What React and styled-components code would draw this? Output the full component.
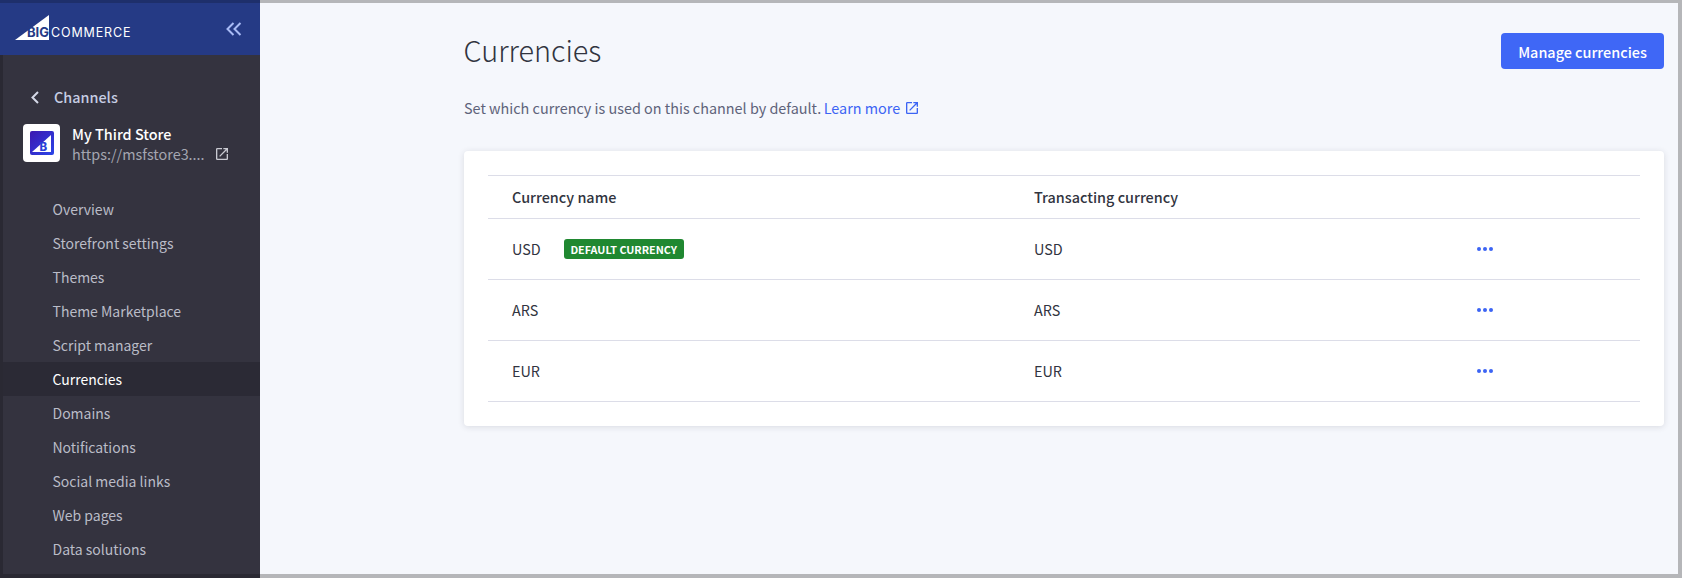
import styled, { createGlobalStyle } from "styled-components";

const GlobalStyle = createGlobalStyle`
  html, body {
    margin: 0;
    padding: 0;
    height: 100%;
    overflow: hidden;
  }
  #root {
    height: 100%;
  }
  * {
    box-sizing: border-box;
  }
`;

const Page = styled.div`
  display: flex;
  width: 1682px;
  height: 578px;
  background-color: #b5b6b9;
  font-family: "Noto Sans CJK SC", "Noto Sans", sans-serif;
  font-size: 14.4px;
  color: #313440;
`;

const Sidebar = styled.aside`
  width: 260px;
  height: 578px;
  flex-shrink: 0;
  display: flex;
  flex-direction: column;
  background-color: #34333f;
  border-left: 3px solid #2a2933;
  border-bottom: 4px solid #2a2933;
`;

const SidebarHeader = styled.div`
  height: 55px;
  margin-left: -3px;
  padding: 0 18px 0 15px;
  display: flex;
  align-items: center;
  justify-content: space-between;
  background-color: #253a85;
  border-top: 3px solid #1e2f6b;
`;

const BackRow = styled.div`
  margin-top: 30px;
  height: 24px;
  padding-left: 27px;
  display: flex;
  align-items: center;
  gap: 14px;
  color: #c6cde3;
  font-weight: 500;
  line-height: 24px;
`;

const Store = styled.div`
  margin-top: 15px;
  padding-left: 20px;
  height: 38px;
  display: flex;
  gap: 12px;
`;

const StoreLogo = styled.div`
  width: 37px;
  height: 38px;
  display: flex;
  align-items: center;
  justify-content: center;
  background-color: #fff;
  border-radius: 4px;
`;

const StoreInfo = styled.div`
  display: flex;
  flex-direction: column;
  margin-top: -1px;
`;

const StoreName = styled.div`
  color: #fff;
  font-weight: 500;
  line-height: 21px;
`;

const UrlRow = styled.div`
  display: flex;
  align-items: center;
  gap: 10px;
  color: #a4a6b1;
  line-height: 19px;
`;

const StoreUrl = styled.span`
  width: 132px;
  white-space: nowrap;
`;

const Nav = styled.nav`
  margin-top: 30px;
  display: flex;
  flex-direction: column;
`;

const NavItem = styled.a`
  height: 34px;
  padding-left: 49.5px;
  font-size: 14px;
  line-height: 34px;
  color: ${(props) => (props.$active ? "#ffffff" : "#babcc7")};
  background-color: ${(props) => (props.$active ? "#2b2a35" : "transparent")};
`;

const Main = styled.main`
  width: 1418px;
  height: 571px;
  margin-top: 3px;
  padding: 30px 14px 0 204px;
  background-color: #f5f7fc;
`;

const TitleRow = styled.div`
  height: 36px;
  display: flex;
  align-items: center;
  justify-content: space-between;
`;

const Title = styled.h1`
  margin: -2px 0 0 -0.5px;
  font-size: 28.8px;
  font-weight: 200;
  line-height: 36px;
  color: #313440;
`;

const Button = styled.button`
  width: 163px;
  height: 36px;
  padding: 0;
  border: none;
  border-radius: 4px;
  background-color: #3f67f6;
  color: #fff;
  font-family: inherit;
  font-size: 14.4px;
  font-weight: 500;
`;

const Subtitle = styled.p`
  margin: 27px 0 0;
  display: flex;
  align-items: center;
  height: 24px;
  line-height: 24px;
  color: #5e637a;
`;

const LearnMore = styled.a`
  margin-left: 2.5px;
  display: inline-flex;
  align-items: center;
  gap: 4px;
  color: #3c64f4;
`;

const Card = styled.section`
  margin-top: 31px;
  padding: 24px;
  background-color: #fff;
  border-radius: 4px;
  box-shadow: 0 1px 6px rgba(49, 52, 64, 0.14);
`;

const Table = styled.div`
  border-top: 1px solid #dcdde8;
`;

const Row = styled.div`
  display: grid;
  grid-template-columns: 522px 443px 187px;
  align-items: center;
  height: ${(props) => (props.$head ? "43px" : "61px")};
  border-bottom: 1px solid #dcdde8;
  font-weight: ${(props) => (props.$head ? 500 : 400)};
`;

const Cell = styled.div`
  padding-left: 24px;
  display: flex;
  align-items: center;
  line-height: 24px;
`;

const Badge = styled.span`
  margin-left: 23px;
  width: 120px;
  height: 20px;
  display: flex;
  align-items: center;
  justify-content: center;
  background-color: #208831;
  border-radius: 3px;
  color: #fff;
  font-size: 10.8px;
  font-weight: 700;
  line-height: 20px;
`;

const Dots = styled.svg`
  display: block;
  width: 16px;
  height: 4px;
  fill: #3c64f4;
`;

const Logo = () => (
  <svg width="120" height="30" viewBox="0 0 120 30" style={{ display: "block" }}>
    <polygon points="0,26 34,1 34,26" fill="#fff" />
    <text x="12" y="23" fontFamily="Inter, sans-serif" fontSize="13" fontWeight="700" fill="#253a85">
      BIG
    </text>
    <text x="36" y="23" fontFamily="Inter, sans-serif" fontSize="12.5" fontWeight="400" letterSpacing="0.85" fill="#fff">
      COMMERCE
    </text>
  </svg>
);

const CollapseIcon = () => (
  <svg width="16" height="14" viewBox="0 0 16 14" fill="none" stroke="#a9bbf5" strokeWidth="2">
    <path d="M7.5 1 1.5 7l6 6M14.5 1l-6 6 6 6" />
  </svg>
);

const BackIcon = () => (
  <svg width="10" height="13" viewBox="0 0 10 13" fill="none" stroke="#d5d9e8" strokeWidth="2">
    <path d="M8 1 2.5 6.5 8 12" />
  </svg>
);

const ExternalIcon = ({ color }) => (
  <svg width="16" height="16" viewBox="0 0 24 24" fill={color}>
    <path d="M19 19H5V5h7V3H5a2 2 0 0 0-2 2v14a2 2 0 0 0 2 2h14c1.1 0 2-.9 2-2v-7h-2v7zM14 3v2h3.59l-9.83 9.83 1.41 1.41L19 6.41V10h2V3h-7z" />
  </svg>
);

const StoreMark = () => (
  <svg width="24" height="24" viewBox="0 0 24 24">
    <defs>
      <linearGradient id="storeMark" x1="0" y1="0" x2="1" y2="1">
        <stop offset="0" stopColor="#3d17b0" />
        <stop offset="1" stopColor="#2a45e8" />
      </linearGradient>
    </defs>
    <rect width="24" height="24" rx="2" fill="url(#storeMark)" />
    <polygon points="2,21 21,4 21,21" fill="#fff" />
    <text x="9.5" y="20" fontFamily="Inter, sans-serif" fontSize="11.5" fontWeight="800" fill="#2a3fd8">
      B
    </text>
  </svg>
);

const MoreIcon = () => (
  <Dots viewBox="0 0 16 4">
    <circle cx="2" cy="2" r="2" />
    <circle cx="8" cy="2" r="2" />
    <circle cx="14" cy="2" r="2" />
  </Dots>
);

const navItems = [
  "Overview",
  "Storefront settings",
  "Themes",
  "Theme Marketplace",
  "Script manager",
  "Currencies",
  "Domains",
  "Notifications",
  "Social media links",
  "Web pages",
  "Data solutions",
];

const currencies = ["USD", "ARS", "EUR"];

const App = () => {
  return (
    <Page>
      <GlobalStyle />
      <Sidebar>
        <SidebarHeader>
          <Logo />
          <CollapseIcon />
        </SidebarHeader>
        <BackRow>
          <BackIcon />
          Channels
        </BackRow>
        <Store>
          <StoreLogo>
            <StoreMark />
          </StoreLogo>
          <StoreInfo>
            <StoreName>My Third Store</StoreName>
            <UrlRow>
              <StoreUrl>https://msfstore3....</StoreUrl>
              <ExternalIcon color="#c9cad2" />
            </UrlRow>
          </StoreInfo>
        </Store>
        <Nav>
          {navItems.map((item) => (
            <NavItem key={item} $active={item === "Currencies"}>
              {item}
            </NavItem>
          ))}
        </Nav>
      </Sidebar>
      <Main>
        <TitleRow>
          <Title>Currencies</Title>
          <Button>Manage currencies</Button>
        </TitleRow>
        <Subtitle>
          Set which currency is used on this channel by default.
          <LearnMore>
            Learn more
            <ExternalIcon color="#3c64f4" />
          </LearnMore>
        </Subtitle>
        <Card>
          <Table>
            <Row $head>
              <Cell>Currency name</Cell>
              <Cell>Transacting currency</Cell>
              <Cell />
            </Row>
            {currencies.map((code) => (
              <Row key={code}>
                <Cell>
                  {code}
                  {code === "USD" && <Badge>DEFAULT CURRENCY</Badge>}
                </Cell>
                <Cell>{code}</Cell>
                <Cell>
                  <MoreIcon />
                </Cell>
              </Row>
            ))}
          </Table>
        </Card>
      </Main>
    </Page>
  );
};

export default App;
